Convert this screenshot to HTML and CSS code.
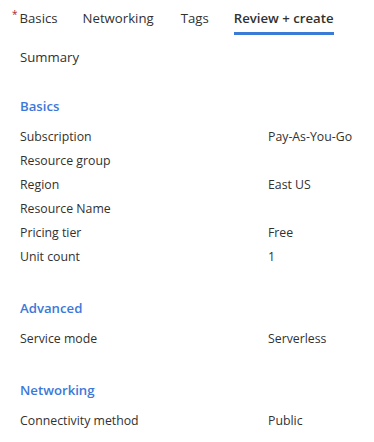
FILE: index.html
```html
<!DOCTYPE html>
<html lang="en">
<head>
    <meta charset="UTF-8">
    <title>Review + create</title>
    <link rel="stylesheet" href="styles.css">
</head>
<body>
    <!-- Pestañas -->
    <div class="tabs">
        <div class="tab"><span class="required">*</span>Basics</div>
        <div class="tab">Networking</div>
        <div class="tab">Tags</div>
        <div class="tab active">Review + create</div>
    </div>

    <div class="content">
        <div class="summary">Summary</div>

        <div class="section">
            <div class="section-title">Basics</div>
            <div class="row"><span class="label">Subscription</span><span class="value">Pay-As-You-Go</span></div>
            <div class="row"><span class="label">Resource group</span><span class="value"></span></div>
            <div class="row"><span class="label">Region</span><span class="value">East US</span></div>
            <div class="row"><span class="label">Resource Name</span><span class="value"></span></div>
            <div class="row"><span class="label">Pricing tier</span><span class="value">Free</span></div>
            <div class="row"><span class="label">Unit count</span><span class="value">1</span></div>
        </div>

        <div class="section">
            <div class="section-title">Advanced</div>
            <div class="row"><span class="label">Service mode</span><span class="value">Serverless</span></div>
        </div>

        <div class="section">
            <div class="section-title">Networking</div>
            <div class="row"><span class="label">Connectivity method</span><span class="value">Public</span></div>
        </div>
    </div>
</body>
</html>
```

FILE: styles.css
```css
/* Estilos base */
body {
    margin: 0;
    padding: 0;
    background: #fff;
    color: #323130;
    font-family: "Open Sans", "Noto Sans", sans-serif;
    font-size: 12.3px;
}

/* Pestañas */
.tabs {
    display: flex;
    padding: 4px 0 0 12px;
    white-space: nowrap;
}

.tab {
    height: 28px;
    line-height: 28px;
    margin-right: 25px;
    font-size: 13.2px;
    color: #323130;
    border-bottom: 3px solid transparent;
}

.tab:nth-child(2) {
    margin-right: 27px;
}

.tab.active {
    font-weight: 600;
    border-bottom-color: #3a7bd5;
}

.required {
    color: #a4262c;
    font-size: 10px;
    vertical-align: top;
    line-height: 20px;
    margin-right: 2px;
}

/* Contenido */
.content {
    padding: 0 20px;
    white-space: nowrap;
}

.summary {
    margin-top: 12px;
    font-size: 13.2px;
    line-height: 20px;
}

.section {
    margin-top: 29px;
}

.section-title {
    color: #3c78d8;
    font-weight: 600;
    font-size: 13.2px;
    line-height: 20px;
    margin-bottom: 9px;
}

.row {
    display: flex;
    height: 24px;
    line-height: 24px;
}

.label {
    width: 248px;
    flex-shrink: 0;
}
```
